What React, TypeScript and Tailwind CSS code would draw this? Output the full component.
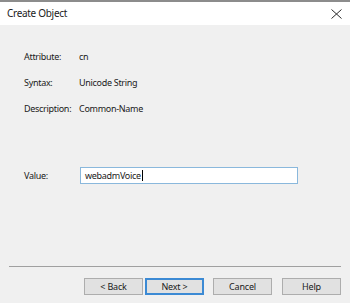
const font = { fontFamily: '"Noto Sans", "Open Sans", sans-serif' };

function Field({ label, value }: { label: string; value: string }) {
  return (
    <div className="flex h-[26px] items-center text-[9px] tracking-[-0.3px] text-[#1a1a1a]">
      <span className="w-[55px]">{label}</span>
      <span>{value}</span>
    </div>
  );
}

function Btn({ children, primary }: { children: string; primary?: boolean }) {
  return (
    <button
      className={
        "flex h-[17px] w-[59px] items-center justify-center bg-[#e1e1e1] text-[9px] tracking-[-0.2px] text-[#1a1a1a] " +
        (primary ? "border-2 border-[#3c8ad4]" : "border border-[#adadad]")
      }
    >
      {children}
    </button>
  );
}

export default function App() {
  return (
    <div className="flex h-[303px] w-[350px] flex-col overflow-hidden bg-[#f0f0f0]" style={font}>
      <div className="h-[2px] bg-[#8c8c8c]" />
      <div className="flex h-[23px] items-center justify-between bg-white pl-[7px] pr-[7px]">
        <span className="text-[10px] tracking-[-0.3px] text-[#1a1a1a]">Create Object</span>
        <svg width="11" height="10" viewBox="0 0 11 10" className="mr-[1px]">
          <path d="M0.5 0.5 L10.5 9.5 M10.5 0.5 L0.5 9.5" stroke="#2b2b2b" strokeWidth="1" fill="none" />
        </svg>
      </div>

      <div className="flex flex-1 flex-col pl-[24px] pt-[19px]">
        <Field label="Attribute:" value="cn" />
        <Field label="Syntax:" value="Unicode String" />
        <Field label="Description:" value="Common-Name" />

        <div className="mt-[45px] flex h-[17px] items-center text-[9px] tracking-[-0.3px] text-[#1a1a1a]">
          <span className="w-[56px]">Value:</span>
          <div className="flex h-[17px] w-[218px] items-center border border-[#8ab8dc] bg-white pl-[4px]">
            <span>webadmVoice</span>
            <span className="ml-[1px] h-[11px] w-px bg-black" />
          </div>
        </div>
      </div>

      <div className="mx-[9px] h-px bg-[#a0a0a0]" />

      <div className="flex pb-[8px] pl-[84px] pt-[11px]">
        <Btn>&lt; Back</Btn>
        <div className="ml-[2px]">
          <Btn primary>Next &gt;</Btn>
        </div>
        <div className="ml-[9px]">
          <Btn>Cancel</Btn>
        </div>
        <div className="ml-[10px]">
          <Btn>Help</Btn>
        </div>
      </div>
    </div>
  );
}
